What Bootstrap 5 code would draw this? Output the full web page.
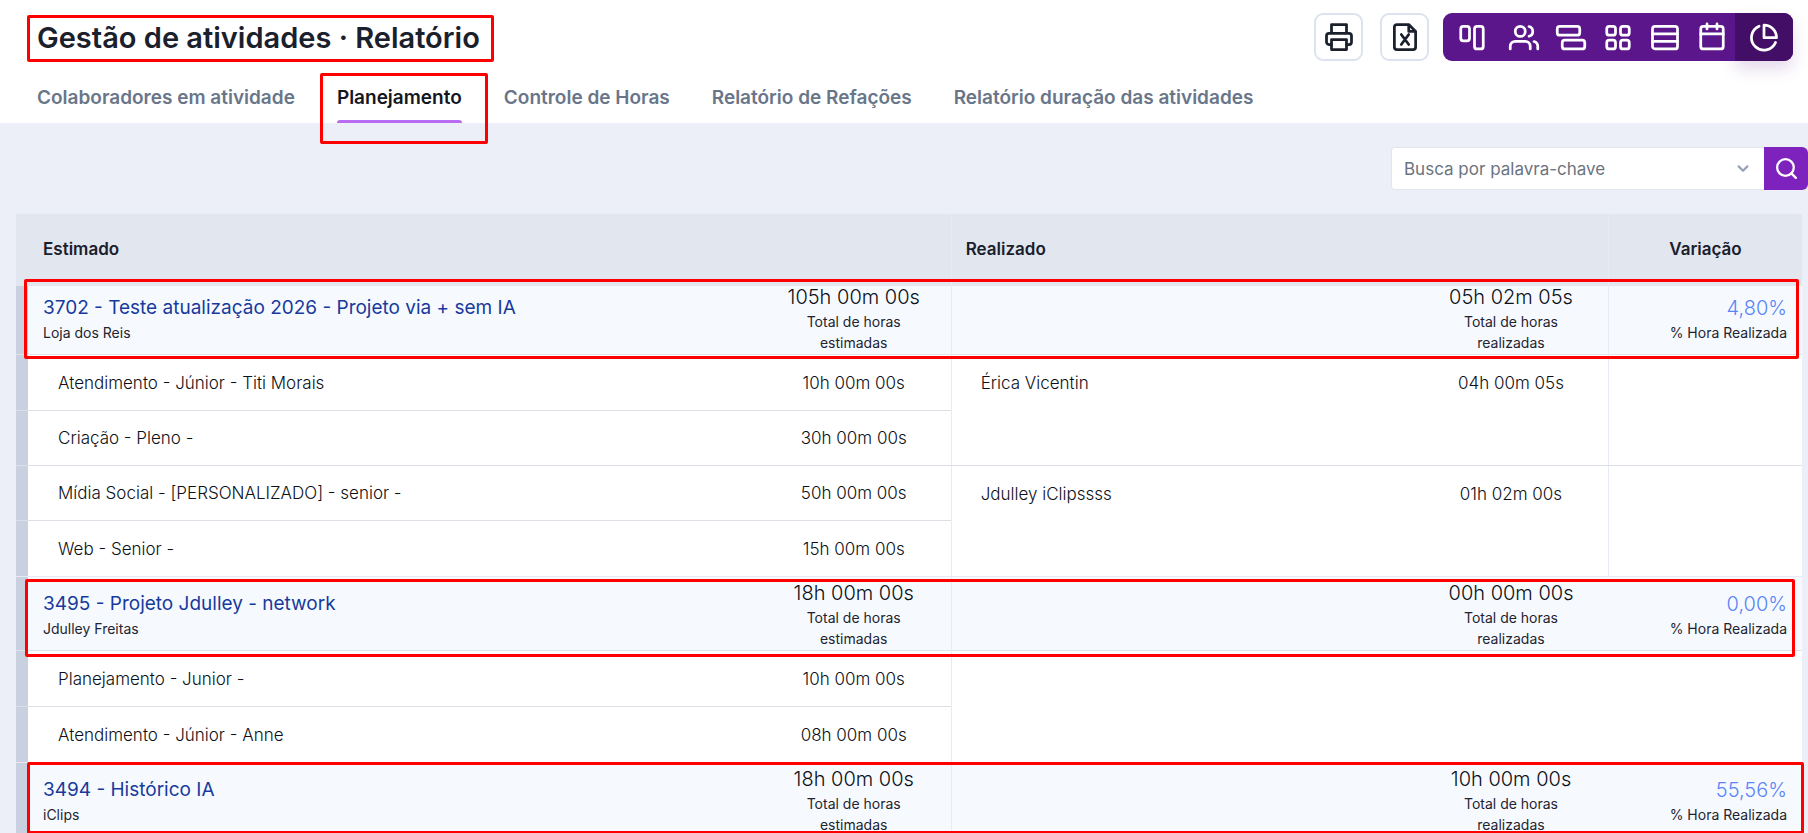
<!DOCTYPE html>
<html lang="pt-BR">
<head>
<meta charset="utf-8">
<meta name="viewport" content="width=device-width, initial-scale=1">
<title>Gestão de atividades · Relatório</title>
<link href="https://cdn.jsdelivr.net/npm/bootstrap@5.3.0/dist/css/bootstrap.min.css" rel="stylesheet">
<style>
  body { font-family: Inter, "Liberation Sans", sans-serif; background: #eceff8; color: #1e2430; }
  .ico { width: 30px; height: 30px; fill: none; stroke: currentColor; stroke-width: 2.2; stroke-linecap: round; stroke-linejoin: round; display: block; }
  .callout-box { position: absolute; border: 3px solid #f00; border-radius: 2px; pointer-events: none; z-index: 2; }

  .page-head { background: #fff; padding: 13px 15px 0 37px; }
  .page-title { font-size: 29px; line-height: 46px; padding-top: 2px; font-weight: 600; color: #1a202c; }
  .page-title .callout-box { inset: 2px -14px -1px -10px; }
  .tool-btn { width: 49px; height: 48px; border: 2px solid #dce2ee; border-radius: 9px; background: #fff; color: #1a202c; }
  .tools { gap: 17px; }
  .view-group { background: #5b168b; border-radius: 9px; padding-left: 4px; margin-left: 14px; }
  .view-btn { width: 47px; height: 48px; border: 0; border-radius: 0; color: #fff; padding: 0; }
  .view-btn:first-child { width: 50px; margin-right: 3px; }
  .view-btn.active { width: 58px; background: #430e66; color: #fff; border-radius: 0 9px 9px 0; box-shadow: 0 8px 16px rgba(91, 22, 139, .16); }

  .report-tabs { gap: 42px; }
  .report-tabs .nav-link { padding: 23px 0 11px; font-size: 19px; line-height: 28px; font-weight: 600; color: #697689; position: relative; }
  .report-tabs .nav-link.active { color: #14171f; }
  .report-tabs .nav-link.active::after { content: ""; position: absolute; left: 0; right: 0; bottom: 0; height: 3px; background: #b76cf2; border-radius: 3px 3px 0 0; }
  .report-tabs .callout-box { inset: 12px -26px -21px -17px; }

  .search-row { padding: 24px 0; }
  .search-row form { width: 417px; }
  .search-row .form-select { height: 43px; font-size: 17px; color: #6b7480; border: 1px solid #e2e6ef; border-right: 0; border-radius: 4px 0 0 4px; padding: 2px 40px 0 12px;
    background-image: url("data:image/svg+xml,%3Csvg xmlns='http://www.w3.org/2000/svg' viewBox='0 0 16 16' fill='none' stroke='%2398a3b8' stroke-width='2.6' stroke-linecap='round' stroke-linejoin='round'%3E%3Cpath d='M3 5l5 5 5-5'/%3E%3C/svg%3E"); background-size: 14px 14px; background-position: right 14px center; }
  .search-btn { width: 44px; height: 43px; padding: 0; background: #7e22bd; color: #fff; border: 0; border-radius: 0 6px 6px 0; }
  .search-btn .ico { width: 25px; height: 25px; }

  .plan-wrap { padding: 0 6px 0 16px; }
  .plan { table-layout: fixed; width: 100%; border-collapse: separate; border-spacing: 0; font-size: 17px; line-height: 24px; font-weight: 300; color: #0c1018; }
  .plan th { background: #e2e6ef; height: 67px; font-size: 17px; font-weight: 600; color: #1a202c; padding: 3px 14px 0 15px; }
  .plan th.div-l { padding-left: 14px; }
  .plan .w-bar { width: 12px; }
  .plan .w-name { width: 40.8%; }
  .plan .w-num { width: 194px; }
  .plan td { background: #fff; padding: 0; }
  .plan .div-l { border-left: 1px solid #e8ebf5; }
  .plan .bar { background: #c9d0df; border-bottom: 1px solid #e4e8f1; }
  .plan .item td { height: 55px; }
  .plan .item td.who { padding-left: 30px; }
  .plan .item td.top { vertical-align: top; padding-top: 16px; padding-left: 0; }
  .plan .item td.who.top { padding-left: 29px; }
  .plan .item td.ln, .plan .item td.bar { border-bottom: 1px solid #dcdfe6; }
  .plan .item td.last, .plan .project + .item td { height: 56px; }
  .plan .item td.last { border-bottom-color: #e8ebf5; }
  .plan .project { position: relative; }
  .plan .project td { height: 74px; background: #f6fafe; border-bottom: 1px solid #dfe3ec; }
  .plan .project td.bar { background: #c9d0df; }
  .plan .under-head td { box-shadow: inset 0 5px 0 #e2e6ef; }
  .plan .project .big { font-size: 20px; line-height: 28px; display: block; white-space: nowrap; }
  .plan .project .tiny { font-size: 14px; line-height: 22px; display: block; font-weight: 400; color: #1e2430; }
  .plan .project .sum .tiny { padding: 0 44px; line-height: 21px; }
  .plan .project a.big { color: #173a9c; text-decoration: none; font-weight: 400; font-size: 19px; }
  .plan .project .lead-cell { padding: 2px 0 0 15px; }
  .plan .project .pct { color: #5a84f7; }
  .plan .project .end { padding: 2px 15px 0 0; }
  .box-a { inset: -2px 3px -4px 8px; }
  .box-b { inset: 2px 7px -6px 9px; }
  .box-c { inset: -1px -2px 3px 11px; }
</style>
</head>
<body class="vh-100 overflow-hidden">
<header class="page-head">
  <div class="d-flex align-items-center">
    <h1 class="page-title position-relative m-0 me-auto">Gestão de atividades · Relatório<span class="callout-box"></span></h1>
    <div class="tools d-flex">
      <button type="button" class="btn tool-btn p-0 d-flex align-items-center justify-content-center" aria-label="Imprimir">
        <svg class="ico" viewBox="0 0 24 24"><path d="M6 9V2h12v7M6 18H4a2 2 0 0 1-2-2v-5a2 2 0 0 1 2-2h16a2 2 0 0 1 2 2v5a2 2 0 0 1-2 2h-2"/><path d="M6 14h12v8H6z"/></svg>
      </button>
      <button type="button" class="btn tool-btn p-0 d-flex align-items-center justify-content-center" aria-label="Exportar Excel">
        <svg class="ico" viewBox="0 0 24 24"><path d="M15 2H5.500a2 2 0 0 0-2 2v16a2 2 0 0 0 2 2h13a2 2 0 0 0 2-2V7.500zM15 2v5.500h5.500M9 10l6 8M15 10l-6 8"/></svg>
      </button>
    </div>
    <div class="view-group d-flex" role="group" aria-label="Visualização">
      <button type="button" class="btn view-btn d-flex align-items-center justify-content-center" aria-label="Kanban"><svg class="ico" viewBox="0 0 24 24"><rect x="3" y="3.500" width="7" height="11.500" rx="2"/><rect x="14" y="3.500" width="7" height="18" rx="2"/></svg></button>
      <button type="button" class="btn view-btn d-flex align-items-center justify-content-center" aria-label="Equipe"><svg class="ico overflow-visible" viewBox="0 -0.500 24 24"><path d="M17 21v-2a4 4 0 0 0-4-4H5a4 4 0 0 0-4 4v2"/><circle cx="9" cy="7" r="4"/><path d="M23 21v-2a4 4 0 0 0-3-3.870M16 3.130a4 4 0 0 1 0 7.750"/></svg></button>
      <button type="button" class="btn view-btn d-flex align-items-center justify-content-center" aria-label="Cronograma"><svg class="ico overflow-visible" viewBox="0 0 24 24"><rect x="1" y="3.500" width="18" height="7" rx="2"/><rect x="5" y="14.500" width="18" height="7" rx="2"/></svg></button>
      <button type="button" class="btn view-btn d-flex align-items-center justify-content-center" aria-label="Grade"><svg class="ico" viewBox="0 0 24 24"><rect x="3" y="3.500" width="7" height="7" rx="2"/><rect x="14" y="3.500" width="7" height="7" rx="2"/><rect x="3" y="14.500" width="7" height="7" rx="2"/><rect x="14" y="14.500" width="7" height="7" rx="2"/></svg></button>
      <button type="button" class="btn view-btn d-flex align-items-center justify-content-center" aria-label="Lista"><svg class="ico" viewBox="0 0 24 24"><rect x="2" y="3.500" width="20" height="18" rx="2"/><path d="M2 9.500h20M2 15.500h20"/></svg></button>
      <button type="button" class="btn view-btn d-flex align-items-center justify-content-center" aria-label="Calendário"><svg class="ico" viewBox="0 0 24 24"><rect x="3" y="3.500" width="18" height="18" rx="2"/><path d="M3 9.500h18M8 1.500v4M16 1.500v4"/></svg></button>
      <button type="button" class="btn view-btn active d-flex align-items-center justify-content-center" aria-label="Relatório"><svg class="ico" viewBox="0 -0.500 24 24"><path d="M21.210 15.890A10 10 0 1 1 8 2.830M22 12A10 10 0 0 0 12 2v10z"/></svg></button>
    </div>
  </div>
  <nav class="nav report-tabs flex-nowrap text-nowrap">
    <a class="nav-link" href="#">Colaboradores em atividade</a>
    <a class="nav-link active" href="#" aria-current="page">Planejamento<span class="callout-box"></span></a>
    <a class="nav-link" href="#">Controle de Horas</a>
    <a class="nav-link" href="#">Relatório de Refações</a>
    <a class="nav-link" href="#">Relatório duração das atividades</a>
  </nav>
</header>

<main>
  <div class="search-row d-flex justify-content-end">
    <form class="d-flex">
      <select class="form-select" aria-label="Busca por palavra-chave"><option>Busca por palavra-chave</option></select>
      <button type="button" class="btn search-btn flex-shrink-0 d-flex align-items-center justify-content-center" aria-label="Buscar"><svg class="ico" viewBox="0 0 24 24"><circle cx="11" cy="11" r="8"/><path d="M21 21l-4.350-4.350"/></svg></button>
    </form>
  </div>

  <div class="plan-wrap">
    <table class="plan">
      <colgroup><col class="w-bar"><col class="w-name"><col class="w-num"><col><col class="w-num"><col class="w-num"></colgroup>
      <thead>
        <tr><th class="p-0"></th><th colspan="2">Estimado</th><th class="div-l" colspan="2">Realizado</th><th class="div-l text-center">Variação</th></tr>
      </thead>
      <tbody>
        <tr class="project under-head">
          <td class="bar"></td>
          <td class="lead-cell"><a class="big" href="#">3702 - Teste atualização 2026 - Projeto via + sem IA</a><span class="tiny">Loja dos Reis</span><span class="callout-box box-a"></span></td>
          <td class="sum text-center"><span class="big">105h 00m 00s</span><span class="tiny">Total de horas estimadas</span></td>
          <td class="div-l"></td>
          <td class="sum text-center"><span class="big">05h 02m 05s</span><span class="tiny">Total de horas realizadas</span></td>
          <td class="div-l end text-end"><span class="big pct">4,80%</span><span class="tiny">% Hora Realizada</span></td>
        </tr>
        <tr class="item"><td class="bar"></td><td class="ln who">Atendimento - Júnior - Titi Morais</td><td class="ln text-center">10h 00m 00s</td><td class="ln div-l who top" rowspan="2">Érica Vicentin</td><td class="ln top text-center" rowspan="2">04h 00m 05s</td><td class="ln div-l" rowspan="2"></td></tr>
        <tr class="item"><td class="bar"></td><td class="ln who">Criação - Pleno -</td><td class="ln text-center">30h 00m 00s</td></tr>
        <tr class="item"><td class="bar"></td><td class="ln who">Mídia Social - [PERSONALIZADO] - senior -</td><td class="ln text-center">50h 00m 00s</td><td class="ln last div-l who top" rowspan="2">Jdulley iClipssss</td><td class="ln last top text-center" rowspan="2">01h 02m 00s</td><td class="ln last div-l" rowspan="2"></td></tr>
        <tr class="item"><td class="bar last"></td><td class="ln last who">Web - Senior -</td><td class="ln last text-center">15h 00m 00s</td></tr>

        <tr class="project">
          <td class="bar"></td>
          <td class="lead-cell"><a class="big" href="#">3495 - Projeto Jdulley - network</a><span class="tiny">Jdulley Freitas</span><span class="callout-box box-b"></span></td>
          <td class="sum text-center"><span class="big">18h 00m 00s</span><span class="tiny">Total de horas estimadas</span></td>
          <td class="div-l"></td>
          <td class="sum text-center"><span class="big">00h 00m 00s</span><span class="tiny">Total de horas realizadas</span></td>
          <td class="end text-end"><span class="big pct">0,00%</span><span class="tiny">% Hora Realizada</span></td>
        </tr>
        <tr class="item"><td class="bar"></td><td class="ln who">Planejamento - Junior -</td><td class="ln text-center">10h 00m 00s</td><td class="ln last div-l" colspan="3" rowspan="2"></td></tr>
        <tr class="item"><td class="bar last"></td><td class="ln last who">Atendimento - Júnior - Anne</td><td class="ln last text-center">08h 00m 00s</td></tr>

        <tr class="project">
          <td class="bar"></td>
          <td class="lead-cell"><a class="big" href="#">3494 - Histórico IA</a><span class="tiny">iClips</span><span class="callout-box box-c"></span></td>
          <td class="sum text-center"><span class="big">18h 00m 00s</span><span class="tiny">Total de horas estimadas</span></td>
          <td class="div-l"></td>
          <td class="sum text-center"><span class="big">10h 00m 00s</span><span class="tiny">Total de horas realizadas</span></td>
          <td class="end text-end"><span class="big pct">55,56%</span><span class="tiny">% Hora Realizada</span></td>
        </tr>
      </tbody>
    </table>
  </div>
</main>
<script src="https://cdn.jsdelivr.net/npm/bootstrap@5.3.0/dist/js/bootstrap.bundle.min.js"></script>
</body>
</html>
